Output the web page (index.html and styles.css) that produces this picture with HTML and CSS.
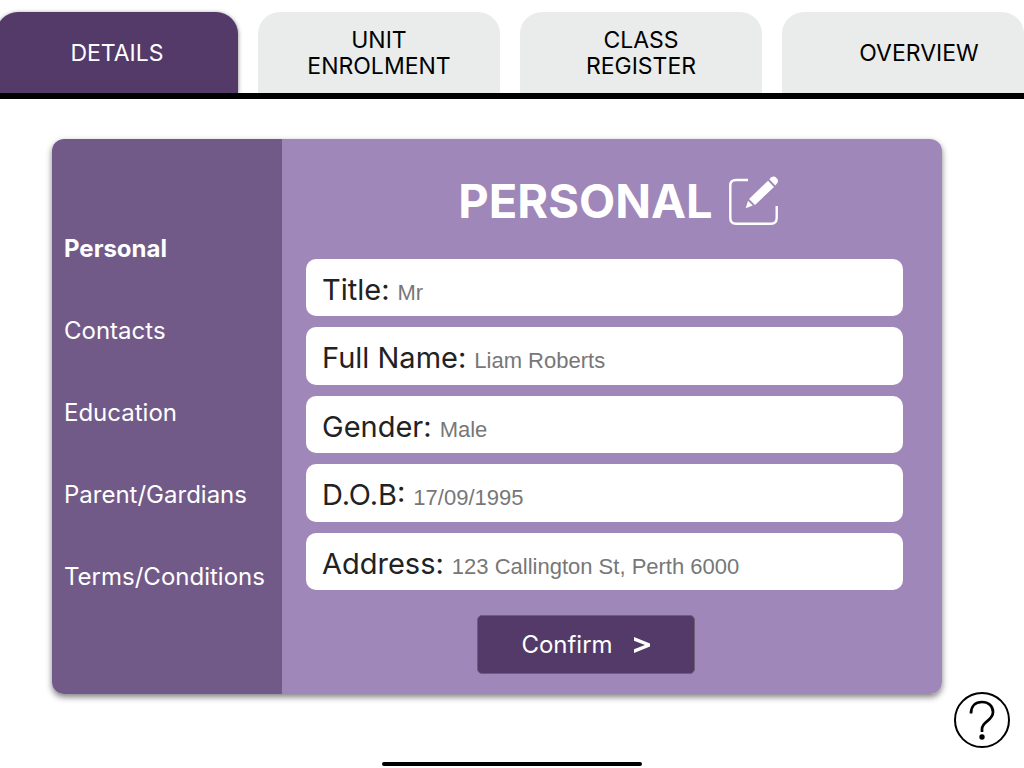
FILE: index.html
```html
<!DOCTYPE html>
<html lang="en">
<head>
    <meta charset="UTF-8">
    <meta name="viewport" content="width=device-width, initial-scale=1.0">
    <title>Personal Details</title>
    <link rel="stylesheet" href="styles.css">
</head>
<body>
    <nav class="tabs">
        <a href="#details" class="tab active">DETAILS</a>
        <a href="#enrolment" class="tab">UNIT<br>ENROLMENT</a>
        <a href="#register" class="tab">CLASS<br>REGISTER</a>
        <a href="#overview" class="tab tab-last">OVERVIEW</a>
    </nav>

    <main class="card">
        <nav class="sidebar">
            <a href="#personal" class="current">Personal</a>
            <a href="#contacts">Contacts</a>
            <a href="#education">Education</a>
            <a href="#parents">Parent/Gardians</a>
            <a href="#terms">Terms/Conditions</a>
        </nav>

        <form class="panel">
            <div class="heading">
                <h1>PERSONAL</h1>
                <button type="button" class="edit" aria-label="Edit">
                    <svg width="52" height="52" viewBox="8 10 52 52">
                        <path d="M29 15H17Q11.300 15 11.300 20.500V53Q11.300 58.700 17 58.700H52Q57.700 58.700 57.700 53V41" fill="none" stroke="#fff" stroke-width="2.400"/>
                        <path d="M49 15.700L55 22L36 40L30 34Z" fill="#fff"/>
                        <path d="M50.300 14.300L52.500 12.300Q55 10.500 57.500 13Q60 15.500 58.300 18L56.300 20.400Z" fill="#fff"/>
                        <path d="M29 35.800L33.800 40.600L26.700 43.300Z" fill="#fff"/>
                    </svg>
                </button>
            </div>

            <div class="fields">
                <div class="field">
                    <label for="title">Title:</label>
                    <input type="text" id="title" value="Mr">
                </div>
                <div class="field">
                    <label for="name">Full Name:</label>
                    <input type="text" id="name" value="Liam Roberts">
                </div>
                <div class="field">
                    <label for="gender">Gender:</label>
                    <input type="text" id="gender" value="Male">
                </div>
                <div class="field">
                    <label for="dob">D.O.B:</label>
                    <input type="text" id="dob" value="17/09/1995">
                </div>
                <div class="field">
                    <label for="address">Address:</label>
                    <input type="text" id="address" value="123 Callington St, Perth 6000">
                </div>
            </div>

            <button type="button" class="confirm">
                Confirm
                <svg width="18" height="18" viewBox="0 0 18 18">
                    <path d="M1 1L17 7.500V10.500L1 17V13.200L12 9L1 4.800Z" fill="#fff"/>
                </svg>
            </button>
        </form>
    </main>

    <button type="button" class="help" aria-label="Help">
        <svg width="56" height="56" viewBox="0 0 56 56" fill="none" stroke="#000">
            <circle cx="28" cy="28" r="27" stroke-width="2"/>
            <path d="M17 21.500C17 14 21.500 10 28 10C34.500 10 39 14 39 20C39 29 28 29 28 37V40" stroke-width="2.700"/>
            <circle cx="28" cy="45" r="2.700" fill="#000" stroke="none"/>
        </svg>
    </button>
    <div class="home-bar"></div>
</body>
</html>
```

FILE: styles.css
```css
* {
    box-sizing: border-box;
}
body {
    margin: 0;
    min-height: 100vh;
    background-color: white;
    font-family: Inter, sans-serif;
    font-size: 24px;
    overflow-x: hidden;
}
a {
    color: inherit;
    text-decoration: none;
}
button {
    border: none;
    padding: 0;
    background: none;
    cursor: pointer;
    font-family: inherit;
}
svg {
    display: block;
}
.tabs {
    display: grid;
    grid-template-columns: repeat(4, 1fr);
    gap: 20px;
    margin-left: -4px;
    padding-top: 12px;
    border-bottom: 6px solid black;
}
.tab {
    display: flex;
    align-items: center;
    justify-content: center;
    height: 81px;
    border-radius: 22px 22px 0 0;
    background-color: #eaeceb;
    color: black;
    font-size: 23px;
    line-height: 26px;
    text-align: center;
}
.tab.active {
    background-color: #533a69;
    color: white;
    box-shadow: 0 1px 4px rgba(0, 0, 0, 0.5);
}
.tab-last {
    padding-left: 32px;
}
.card {
    display: flex;
    margin: 40px 82px 0 52px;
    border-radius: 12px;
    overflow: hidden;
    box-shadow: 0 3px 6px rgba(0, 0, 0, 0.5);
}
.sidebar {
    display: flex;
    flex-direction: column;
    gap: 54px;
    width: 230px;
    padding: 96px 12px;
    background-color: #725a88;
    color: white;
    line-height: 28px;
}
.sidebar .current {
    font-weight: bold;
}
.panel {
    flex: 1;
    padding: 34px 39px 20px 24px;
    background-color: #a087b9;
}
.heading {
    display: flex;
    justify-content: center;
    align-items: center;
    gap: 14px;
    padding-left: 28px;
    height: 56px;
}
h1 {
    margin: 0;
    color: white;
    font-size: 47px;
    line-height: 56px;
}
.fields {
    display: grid;
    gap: 11px;
    min-height: 331px;
    margin-top: 30px;
}
.field {
    display: flex;
    align-items: baseline;
    gap: 8px;
    padding: 13px 16px 0;
    border-radius: 10px;
    background-color: white;
}
.field label {
    color: #222;
    font-size: 29px;
    line-height: 36px;
}
.field input {
    flex: 1;
    min-width: 0;
    padding: 0;
    border: none;
    outline: none;
    background: none;
    color: #777;
    font-family: "Liberation Sans", sans-serif;
    font-size: 22px;
}
.confirm {
    display: flex;
    align-items: center;
    justify-content: center;
    gap: 20px;
    width: 218px;
    height: 59px;
    margin: 25px auto 0 171px;
    border: 1px solid #6b6075;
    border-radius: 5px;
    background-color: #533a69;
    color: white;
    font-size: 24px;
}
.help {
    position: fixed;
    right: 14px;
    bottom: 20px;
}
.home-bar {
    position: fixed;
    bottom: 2px;
    left: 0;
    right: 0;
    width: 260px;
    height: 4px;
    margin: 0 auto;
    border-radius: 2px;
    background-color: black;
}
```
